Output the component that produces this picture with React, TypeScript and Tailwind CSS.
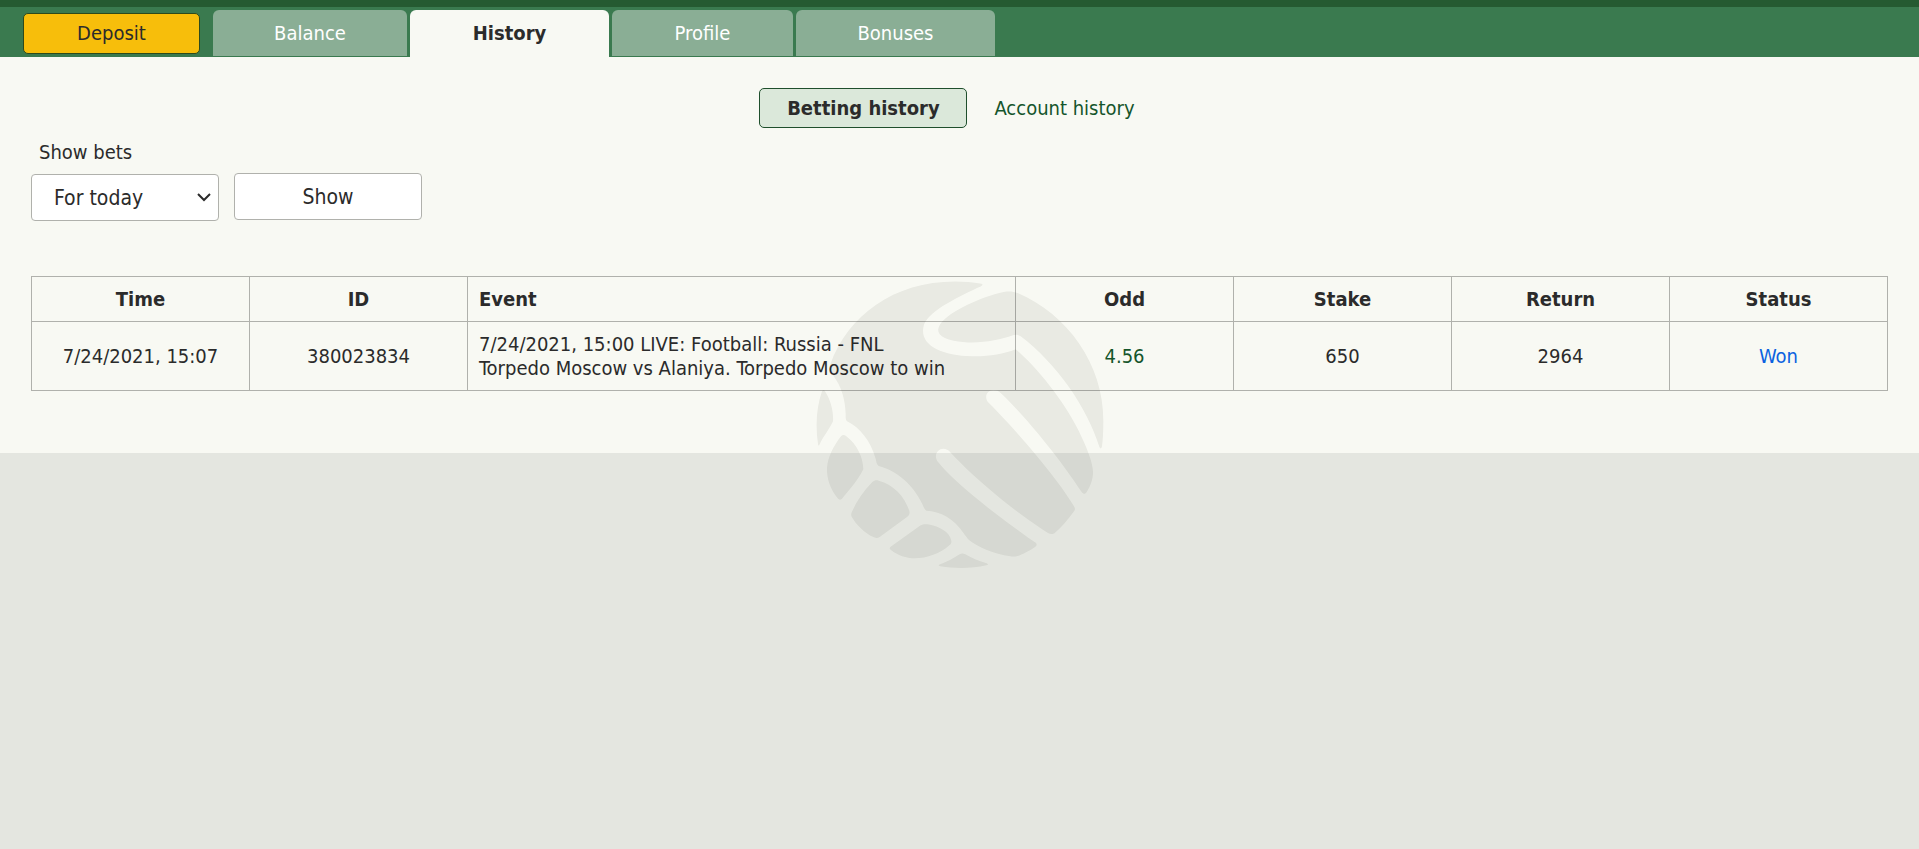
import type { ReactNode } from 'react';

const tabs = [
  { label: 'Balance', width: 'w-[194px]' },
  { label: 'History', width: 'w-[199px]', active: true },
  { label: 'Profile', width: 'w-[181px]' },
  { label: 'Bonuses', width: 'w-[199px]' },
];

const bets = [
  {
    time: '7/24/2021, 15:07',
    id: '380023834',
    event: ['7/24/2021, 15:00 LIVE: Football: Russia - FNL', 'Torpedo Moscow vs Alaniya. Torpedo Moscow to win'],
    odd: '4.56',
    stake: '650',
    payout: '2964',
    status: 'Won',
  },
];

const Head = ({ children, left }: { children: ReactNode; left?: boolean }) => (
  <th
    scope="col"
    className={`h-[45px] border border-[#b0b1ac] font-bold ${left ? 'px-[11px] text-left' : 'text-center'}`}>
    {children}
  </th>
);

const Cell = ({ children, className = 'text-center' }: { children: ReactNode; className?: string }) => (
  <td className={`h-[69px] border border-[#b0b1ac] ${className}`}>{children}</td>
);

// Ball watermark, pinned to the middle of the window
const Watermark = () => (
  <div className="pointer-events-none fixed inset-0 flex items-center justify-center mix-blend-multiply">
    <svg viewBox="107 62 864 862" className="size-[288px]" fill="#f0f0ef" aria-hidden="true">
      <path d="M604 69C612 73 600 78 590 82C520 116 440 155 430 196C416 252 480 284 575 287C625 288 668 281 706 266C770 320 850 420 895 510C920 562 940 610 938 640C936 665 925 685 919 694C915 701 909 701 904 694C850 610 740 470 660 396C636 376 606 398 622 423C700 500 830 650 880 735C886 744 884 748 880 753C862 778 842 800 824 816C817 822 810 821 803 817C700 750 590 660 511 576C490 550 456 572 470 600C530 675 660 770 764 845C771 850 770 854 765 858C745 872 725 881 712 886C704 888 698 888 690 887C640 880 594 860 566 838C560 832 556 826 550 818C522 774 480 752 438 750C432 746 430 740 426 730C398 672 350 630 295 616C288 610 288 602 286 594C270 540 240 502 200 482C195 476 196 470 196 460C195 415 182 375 159 345C151 333 144 323 150 311C210 145 380 35 604 69Z" />
      <path d="M480 190C510 150 600 110 670 94C688 91 700 93 712 97C860 160 970 310 969 480C969 510 968 535 965 557C963 565 960 565 957 558C920 440 830 310 721 227C714 222 706 221 698 224C650 242 580 252 520 240C478 232 464 214 480 190Z" />
      <path d="M125 392C128 386 131 387 134 392C152 420 160 455 158 482C148 505 130 525 118 551C116 556 114 556 113 550C105 496 108 440 125 392Z" />
      <path d="M182 527C187 522 192 522 198 527C230 550 248 590 249 626C232 660 205 690 185 714C180 719 176 718 172 713C150 685 139 655 140 622C142 590 160 555 182 527Z" />
      <path d="M276 664C282 659 288 658 295 660C340 672 372 706 387 750C389 758 387 763 381 768L298 829C292 833 288 833 281 830C253 817 228 793 214 768C212 763 212 758 215 753C230 720 250 690 276 664Z" />
      <path d="M421 794C428 790 434 790 442 791C480 798 508 815 513 840C514 846 512 850 507 854C480 879 440 893 403 893C378 893 352 884 332 868C326 863 327 861 334 856Z" />
      <path d="M538 881C544 877 549 878 555 881C575 893 597 901 619 908C625 911 624 913 618 914C574 924 524 924 480 917C473 915 473 913 480 911C502 903 520 893 538 881Z" />
    </svg>
  </div>
);

const App = () => {
  return (
    <div className="min-h-screen bg-[#e4e6e0] font-['DejaVu_Sans_Condensed','DejaVu_Sans',sans-serif] text-[20px] leading-6 text-[#2b2b2b]">
      <header className="border-t-[7px] border-[#255a31] bg-[#3a7a4f]">
        <nav className="flex h-[50px] pl-[23px]">
          <button
            type="button"
            className="mt-[6px] mr-[13px] h-[41px] w-[177px] rounded-[5px] border border-[#2d4a1c] bg-[#f7be0b] pb-[2px]">
            Deposit
          </button>
          <div className="flex gap-[3px] pt-[3px]">
            {tabs.map((tab) => (
              <a
                key={tab.label}
                href="#"
                className={`flex items-center justify-center rounded-t-[6px] ${tab.width} ${
                  tab.active ? 'bg-[#f8f9f3] pb-px font-bold' : 'mb-px bg-[#8aae95] text-white'
                }`}>
                {tab.label}
              </a>
            ))}
          </div>
        </nav>
      </header>

      <main className="bg-[#f8f9f3] px-[31px] pt-[31px] pb-[62px]">
        <div className="flex items-center justify-center pr-[25px]">
          <a
            href="#"
            className="flex h-10 w-[208px] items-center justify-center rounded-[5px] border border-[#1f4f2c] bg-[#dbe8da] font-bold">
            Betting history
          </a>
          <a href="#" className="ml-[27px] text-[#15552b]">
            Account history
          </a>
        </div>

        <form className="mt-3">
          <label htmlFor="period" className="ml-2 block">
            Show bets
          </label>
          <div className="mt-[9px] flex gap-[15px] text-[21px]">
            <div className="relative w-[188px]">
              <select
                id="period"
                className="mt-px h-[47px] w-full appearance-none rounded-[4px] border border-[#b0b1ac] bg-white pl-[22px]">
                <option>For today</option>
                <option>For a week</option>
                <option>For a month</option>
              </select>
              <svg
                viewBox="0 0 14 9"
                className="pointer-events-none absolute top-5 right-2 h-[9px] w-[14px]"
                fill="none"
                stroke="#2b2b2b"
                strokeWidth="2"
                aria-hidden="true">
                <path d="M1 1l6 6 6-6" />
              </svg>
            </div>
            <button type="button" className="h-[47px] w-[188px] rounded-[4px] border border-[#b0b1ac] bg-white">
              Show
            </button>
          </div>
        </form>

        <table className="mt-[55px] w-full table-fixed border-collapse">
          <colgroup>
            <col className="w-[218px]" />
            <col className="w-[218px]" />
            <col />
            <col className="w-[218px]" />
            <col className="w-[218px]" />
            <col className="w-[218px]" />
            <col className="w-[218px]" />
          </colgroup>
          <thead>
            <tr>
              <Head>Time</Head>
              <Head>ID</Head>
              <Head left>Event</Head>
              <Head>Odd</Head>
              <Head>Stake</Head>
              <Head>Return</Head>
              <Head>Status</Head>
            </tr>
          </thead>
          <tbody>
            {bets.map((bet) => (
              <tr key={bet.id}>
                <Cell>{bet.time}</Cell>
                <Cell>{bet.id}</Cell>
                <Cell className="px-[11px]">
                  {bet.event.map((line) => (
                    <p key={line}>{line}</p>
                  ))}
                </Cell>
                <Cell className="text-center text-[#15552b]">{bet.odd}</Cell>
                <Cell>{bet.stake}</Cell>
                <Cell>{bet.payout}</Cell>
                <Cell className="text-center text-[#0b62e0]">{bet.status}</Cell>
              </tr>
            ))}
          </tbody>
        </table>
      </main>

      <Watermark />
    </div>
  );
};

export default App;
